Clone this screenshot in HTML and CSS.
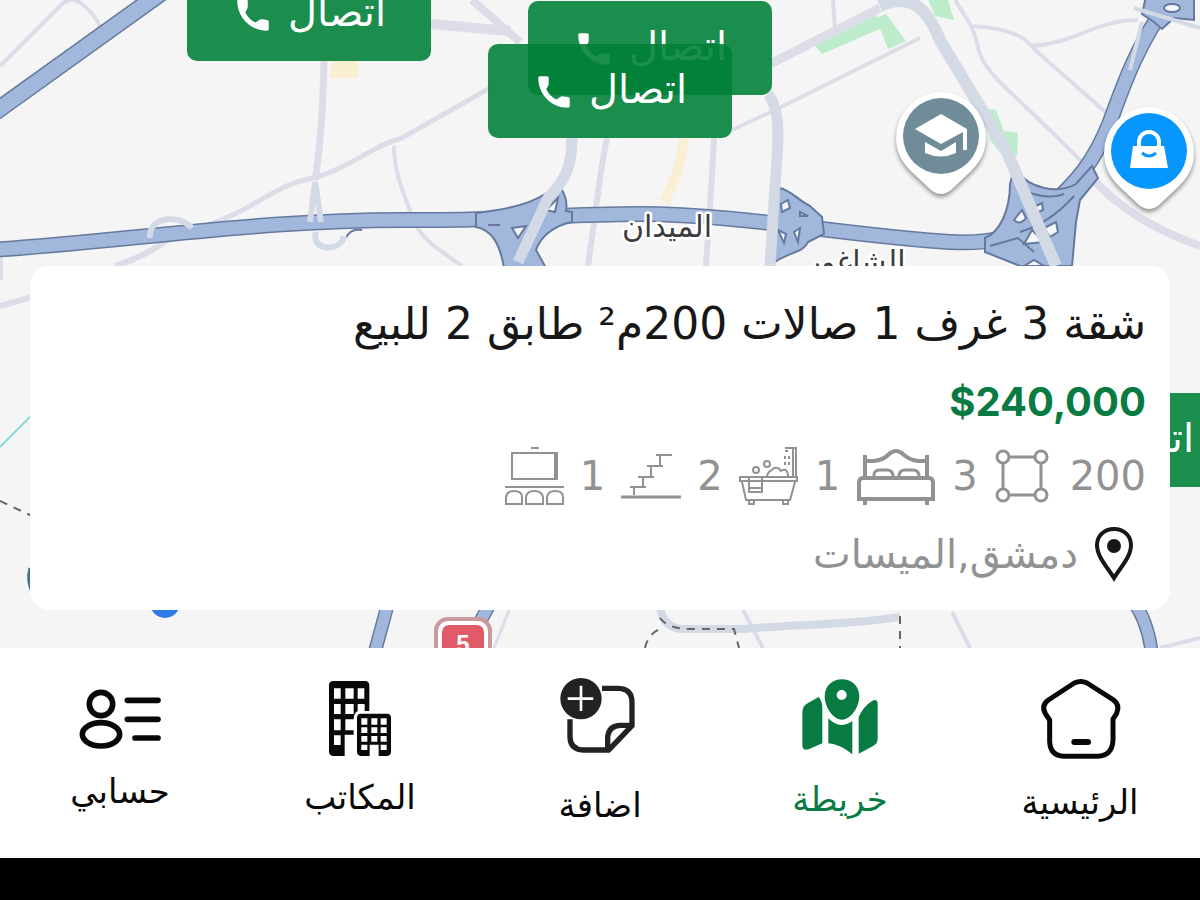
FILE: index.html
```html
<!DOCTYPE html>
<html lang="ar" dir="rtl">
<head>
<meta charset="utf-8">
<meta name="viewport" content="width=device-width, initial-scale=1">
<title>خريطة العقارات</title>
<link rel="stylesheet" href="styles.css">
</head>
<body>
<svg class="defs" aria-hidden="true">
  <symbol id="phone" viewBox="0 0 24 24"><path fill="currentColor" d="M7.6 10.4c1.2 2.6 3.2 4.6 5.8 5.9l2.4-1.6c.5-.3 1-.3 1.5-.2l2.7.4c.6.1 1 .5 1 1.1V20c0 .55-.45 1-1 1-9.39 0-17-7.61-17-17 0-.55.45-1 1-1h4c.6 0 1 .4 1 1v3c0 .5-.1 1-.3 1.400z"/></symbol>
</svg>
<main class="map">
  <svg class="map-canvas" viewBox="0 0 1200 648" preserveAspectRatio="xMidYMid slice" aria-hidden="true">
    <!-- parks and plots -->
    <g fill="#bdeccb">
      <path d="M815 45L876 15L882 28L822 54Z"/><path d="M876 18L886 14L906 41L888 49Z"/><path d="M928 0H948L954 20L935 16Z"/><path d="M984 108L996 110L1004 131L1018 133L1017 155L1006 160L990 140Z"/>
    </g>
    <path fill="#faefd2" d="M332 60H358V78H330Z"/>
    <path fill="none" stroke="#faefd2" stroke-width="10" d="M684 138C682 160 676 180 664 202"/>
    <!-- minor streets -->
    <g fill="none" stroke="#dcdde8" stroke-width="4">
      <path d="M0 66L62 4Q72-4 82 4Q95 14 102 30"/>
      <path d="M324 60C323 110 320 150 315 180" stroke-width="7"/>
      <path d="M205 226C250 212 275 186 305 180C350 170 370 146 402 138L490 88" stroke-width="5"/>
      <path d="M394 146C394 170 402 190 412 216C420 240 440 250 462 266"/>
      <path d="M115 266C145 256 160 246 170 238" stroke-width="6"/>
      <path d="M430 24L510 31" stroke-width="10"/><path d="M472 0L520 42" stroke-width="8"/>
      <path d="M607 138C600 170 596 210 588 266" stroke-width="6"/>
      <path d="M714 138C712 180 709 220 706 266" stroke-width="6"/>
      <path d="M732 130L775 110L920 38"/>
      <path d="M770 64L880 8" stroke-width="9"/>
      <path d="M833 0L835 30"/>
      <path d="M955 0C966 18 975 28 978 48C985 76 1010 88 1085 165"/>
      <path d="M970 26C1015 28 1028 40 1035 50L1110 116"/><path d="M1030 46C1075 44 1095 20 1138 20"/>
      <path d="M0 306L32 297" stroke-width="6"/><path d="M1 256V280"/>
      <path d="M742 608L763 648"/><path d="M952 612L970 648"/><path d="M510 608L494 648" stroke-width="3"/><path d="M1160 648L1200 638"/>
      <path d="M1090 176C1120 210 1160 232 1200 246" stroke-width="8"/>
    </g>
    <!-- highways: dark casing, then blue surface -->
    <g fill="none" stroke="#65799f">
      <path stroke-width="18" d="M-5 112L165-10"/>
      <path stroke-width="16" d="M-10 250C120 242 270 218 420 220C520 220 560 214 640 214C740 214 850 236 950 242C990 244 1010 240 1040 215C1080 180 1095 160 1110 122C1125 80 1140 40 1170 0"/>
      <path stroke-width="14" d="M389 600L374 655M492 600L470 640M1132 600Q1148 620 1152 655"/>
    </g>
    <g fill="none" stroke="#a2b7dc">
      <path stroke-width="15" d="M-5 112L165-10"/>
      <path stroke-width="13" d="M-10 250C120 242 270 218 420 220C520 220 560 214 640 214C740 214 850 236 950 242C990 244 1010 240 1040 215C1080 180 1095 160 1110 122C1125 80 1140 40 1170 0"/>
      <path stroke-width="11" d="M389 600L374 655M492 600L470 640M1132 600Q1148 620 1152 655"/>
    </g>
    <!-- junctions -->
    <g fill="#a2b7dc" stroke="#65799f" stroke-width="2">
      <path d="M476 213C505 210 530 204 545 194L562 190Q568 200 566 211L572 212V222C552 226 540 238 536 250L546 268H504C500 244 492 230 476 227Z"/>
      <path d="M780 188C790 190 798 200 810 206L822 217L824 234L808 242C804 252 790 252 775 262V212Z"/>
      <path d="M1014 168C1030 190 1058 194 1076 184L1092 166L1098 178L1080 200L1076 222L1072 266H1020L985 252L985 238C1000 232 1010 210 1010 184Z"/>
      <path d="M1146-4L1142 14L1154 22L1162 29L1174 18L1194 20V-4Z"/>
    </g>
    <path fill="none" stroke="#65799f" stroke-width="2" d="M488 225H500M1020 232C1040 226 1058 214 1074 196M1028 192Q1048 200 1064 194M990 246L1018 238L1034 252M346 238Q350 228 362 230"/>
    <g fill="#f5f6f8" stroke="#65799f" stroke-width="2">
      <path d="M512 228L526 226L518 238Z"/><path d="M546 210L558 198L555 212Z"/><path d="M781 204L788 200L790 208L782 212Z"/><path d="M800 212L808 216H800Z"/><path d="M794 232L800 228L798 242Z"/><path d="M778 230L786 234L784 243Z"/>
      <path d="M1014 220L1022 210L1026 218Q1020 226 1014 220Z"/><path d="M1036 206L1042 203L1043 210L1036 213Z"/><path d="M1024 244L1032 230L1044 242Z"/><path d="M1044 228L1056 222L1058 232L1050 237Z"/><ellipse cx="1172" cy="8" rx="8" ry="4"/>
      <path d="M1024 266L1034 260L1044 266Z"/>
    </g>
    <g fill="none" stroke="#d3dae6">
      <path stroke-width="11" d="M572 138C572 165 566 180 548 198L518 262"/>
      <path stroke-width="11" d="M768 94C782 110 778 150 775 185L770 266"/>
      <path stroke-width="12" d="M880 6Q905-6 922 10Q932 20 940 40L1006 150L1056 266"/>
      <path stroke-width="6" d="M150 238C148 216 180 214 192 228M316 232C310 252 342 252 344 236"/>
      <path stroke-width="4" d="M1134 8L1200 28M1142 22L1130 70"/>
      <path stroke-width="8" d="M660 606Q662 626 680 629H745C790 624 840 626 900 617"/>
      <path stroke-width="6" d="M315 182L310 222M315 182L321 222"/>
    </g>
    <path fill="none" stroke="#8bd8d8" stroke-width="2" d="M0 447L32 415"/>
    <path fill="none" stroke="#666" stroke-width="2" stroke-dasharray="8 7" d="M0 501L32 516M645 648Q648 634 660 629M660 618Q668 629 690 629H734L739 648M900 616V648"/>
    <path fill="none" stroke="#45708d" stroke-width="3" d="M30 568Q26 582 34 596"/>
    <circle cx="165" cy="603" r="15" fill="#3179e8"/>
    <rect x="436" y="619" width="54" height="44" rx="12" fill="#fff" stroke="#c99a9e" stroke-width="4"/>
    <rect x="442" y="625" width="42" height="34" rx="7" fill="#e05b67"/>
    <text class="shield-text" x="463" y="652">5</text>
    <text class="place-name" x="667" y="237">الميدان</text>
    <text class="place-name" x="856" y="272">الشاغور</text>
    <!-- school pin -->
    <g class="poi"><path fill="#fff" d="M941 92A46 46 0 0 0 896 138C896 154 904 165 914 174L931 190Q941 198 951 190L968 174C978 165 986 154 986 138A46 46 0 0 0 941 92Z"/></g>
    <circle cx="941" cy="136" r="38" fill="#718c99"/>
    <path fill="#fff" d="M915 129L941 114L967 129V150H963V132L941 144ZM925 142L941 151L956 142V153Q941 160 925 153Z"/>
    <!-- shopping pin -->
    <g class="poi"><path fill="#fff" d="M1149 107A46 46 0 0 0 1104 153C1104 169 1112 180 1122 189L1139 205Q1149 213 1159 205L1176 189C1186 180 1194 169 1194 153A46 46 0 0 0 1149 107Z"/></g>
    <circle cx="1149" cy="151" r="38" fill="#0797fc"/>
    <path fill="#fff" d="M1133 146H1164L1168 168H1130Z"/>
    <path fill="none" stroke="#fff" stroke-width="4" d="M1139 148V142A10 10 0 0 1 1159 142V148"/>
    <path fill="none" stroke="#0797fc" stroke-width="3" d="M1142 153Q1149 159 1156 153"/>
  </svg>

  <button class="call call-a" type="button">اتصال<svg class="call-icon" aria-hidden="true"><use href="#phone"/></svg></button>
  <button class="call call-b" type="button">اتصال<svg class="call-icon" aria-hidden="true"><use href="#phone"/></svg></button>
  <button class="call call-c" type="button">اتصال<svg class="call-icon" aria-hidden="true"><use href="#phone"/></svg></button>
  <button class="call call-d" type="button">اتصال<svg class="call-icon" aria-hidden="true"><use href="#phone"/></svg></button>

  <article class="card">
    <h1 class="title">شقة 3 غرف 1 صالات 200م² طابق 2 للبيع</h1>
    <p class="price"><bdi dir="ltr">$240,000</bdi></p>
    <ul class="features">
      <li class="feature">200
        <svg class="feature-icon" viewBox="0 0 60 60" aria-label="المساحة"><g fill="none" stroke="currentColor" stroke-width="3"><path d="M14 11H42M14 49H42M9 17V43M47 17V43"/><circle cx="9" cy="11" r="6"/><circle cx="47" cy="11" r="6"/><circle cx="9" cy="49" r="6"/><circle cx="47" cy="49" r="6"/></g></svg></li>
      <li class="feature">3
        <svg class="feature-icon wide" viewBox="0 0 80 60" aria-label="غرف النوم"><g fill="none" stroke="currentColor" stroke-width="3"><path stroke-width="4" d="M9 32V9M71 32V9M9 15H18Q27 14 32 9Q40 1 48 9Q54 14 62 15H71"/><path d="M18 32V28Q19 24 24 24H31Q36 24 37 29V32M43 32V29Q44 24 49 24H57Q62 24 63 29V32"/><path stroke-width="4" d="M7 32H73Q77 32 77 37V53H3V37Q3 32 7 32ZM9 53V59M71 53V59"/></g></svg></li>
      <li class="feature">1
        <svg class="feature-icon" viewBox="0 0 60 60" aria-label="الحمامات"><g fill="none" stroke="currentColor" stroke-width="2"><path d="M1 31H58V35H1ZM3 36L7 54H51L56 36M10 31H23V46H10ZM10 42H23M10 54V58H15V54M44 54V58H49V54M57 31V2H46M54 31V3M28 31C28 25 33 25 35 22Q40 21 42 25Q49 21 49 31"/><path stroke-dasharray="3 3" d="M46 10V20M50 10V20M46 5H51"/><circle cx="17" cy="24" r="3"/><circle cx="28" cy="18" r="3"/></g></svg></li>
      <li class="feature">2
        <svg class="feature-icon" viewBox="0 0 60 60" aria-label="الطابق"><g fill="none" stroke="currentColor" stroke-width="2"><path d="M9 41H25M17 31H33M26 20H42M35 9H51M13 49V41M22 41V31M30 31V20M39 20V9"/><path stroke-width="3" d="M0 51H60"/></g></svg></li>
      <li class="feature">1
        <svg class="feature-icon" viewBox="0 0 60 60" aria-label="الصالات"><g fill="none" stroke="currentColor" stroke-width="2"><path d="M27 2H35M8 7H53V33H8ZM51 7V33M1 41H60"/><path d="M2 58V51Q3 45 10 45Q18 45 18 51V58ZM22 58V51Q23 45 30 45Q38 45 39 51V58ZM43 58V51Q44 45 51 45Q59 45 59 51V58Z"/></g></svg></li>
    </ul>
    <p class="location"><svg class="location-icon" viewBox="0 0 40 56" aria-hidden="true"><path fill="none" stroke="#171717" stroke-width="4" d="M20 3C10 3 3 10 3 19C3 31 14 42 20 52C26 42 37 31 37 19C37 10 30 3 20 3Z"/><circle cx="20" cy="20" r="7" fill="#171717"/></svg>دمشق,الميسات</p>
  </article>
</main>

<nav class="tabs">
  <a class="tab" href="#home"><svg class="tab-icon home" viewBox="171 39 252 246" aria-hidden="true"><g fill="none" stroke="currentColor" stroke-width="15" stroke-linejoin="round" stroke-linecap="round"><path d="M280 54Q299 45 318 54L396 104Q418 119 407 145L396 162V225Q394 272 350 274H248Q208 272 206 230V165L193 146Q180 121 202 105Z"/><path stroke-width="18" d="M280 231H321"/></g></svg>الرئيسية</a>
  <a class="tab active" href="#map" aria-current="page"><svg class="tab-icon map-tab" viewBox="834 39 252 237" aria-hidden="true"><g fill="currentColor"><path fill-rule="evenodd" d="M966 43C936 43 914 65 914 94C914 123 937 164 966 164C995 164 1018 123 1018 94C1018 65 996 43 966 43ZM965 75A15 15 0 1 1 965 105A15 15 0 1 1 965 75Z"/><path d="M896 96Q907 108 907 130V235L866 253Q847 259 847 240V142Q847 123 864 114Z"/><path d="M925 160Q958 195 997 168V268Q960 238 925 235Z"/><path d="M1016 156Q1030 125 1055 109Q1073 98 1073 119V222Q1073 236 1058 244L1016 266Z"/></g></svg>خريطة</a>
  <a class="tab" href="#add"><svg class="tab-icon add" viewBox="111 39 252 255" aria-hidden="true"><circle cx="180" cy="101" r="62" fill="#222124"/><path fill="none" stroke="#fff" stroke-width="8" d="M180 62V138M140 101H217"/><path fill="none" stroke="#222124" stroke-width="16" d="M243 70H293Q333 72 333 112V182L263 255H187Q147 253 147 215V163M260 258V215Q264 182 298 181H336"/></svg>اضافة</a>
  <a class="tab" href="#offices"><svg class="tab-icon offices" viewBox="834 39 252 231" aria-hidden="true"><path fill="currentColor" fill-rule="evenodd" d="M879 48H976Q987 49 988 60V138H974V117H953V138Q941 145 941 162V209H914V273H879Q868 272 867 261V60Q868 49 879 48ZM882 70V101H902V70ZM916 70V101H941V70ZM953 70V101H973V70ZM882 117V147H902V117ZM916 117V147H941V117ZM882 163V196H902V163ZM916 163V196H941V163ZM882 211V240H902V211Z"/><path fill="currentColor" fill-rule="evenodd" d="M962 146H1042Q1052 147 1053 157V262Q1052 272 1042 273H1016V239H989V273H962Q952 272 951 262V157Q952 147 962 146ZM964 160V179H982V160ZM994 160V179H1012V160ZM1022 160V179H1040V160ZM964 187V204H982V187ZM994 187V204H1012V187ZM1022 187V204H1040V187ZM964 213V230H982V213ZM994 213V230H1012V213ZM1022 213V230H1040V213ZM964 239V255H982V239ZM1022 239V255H1040V239Z"/></svg>المكاتب</a>
  <a class="tab" href="#account"><svg class="tab-icon account" viewBox="114 39 252 213" aria-hidden="true"><g fill="none" stroke="currentColor" stroke-width="17"><circle cx="183" cy="117" r="35"/><ellipse cx="183" cy="208" rx="56" ry="35"/><path stroke-linecap="round" d="M262 106H354M262 163H354M285 219H354"/></g></svg>حسابي</a>
</nav>
<footer class="system-bar"></footer>
</body>
</html>
```

FILE: styles.css
```css
* { box-sizing: border-box; }
body {
  margin: 0;
  min-height: 100vh;
  display: flex;
  flex-direction: column;
  font-family: "DejaVu Sans", sans-serif;
  color: #171717;
  background: #fff;
}
.defs { position: absolute; width: 0; height: 0; }
.map {
  position: relative;
  flex: 1;
  display: flex;
  flex-direction: column;
  justify-content: flex-end;
  padding: 30px 30px 38px;
  overflow: hidden;
  background: #f5f5f5;
}
.map-canvas { position: absolute; inset: 0; width: 100%; height: 100%; }
.poi { filter: drop-shadow(0 3px 2px rgba(0, 0, 0, .4)); }
.place-name {
  font-size: 30px;
  text-anchor: middle;
  fill: #3c3c3c;
  stroke: #fff;
  stroke-width: 5px;
  stroke-linejoin: round;
  paint-order: stroke;
}
.shield-text { font: bold 24px "Liberation Sans", sans-serif; fill: #fff; text-anchor: middle; }

.call {
  position: absolute;
  display: flex;
  align-items: center;
  justify-content: center;
  gap: 14px;
  width: 244px;
  height: 94px;
  padding: 0 0 4px;
  border: 0;
  border-radius: 10px;
  background: rgba(0, 128, 55, .89);
  color: #fff;
  font: 40px "DejaVu Sans", sans-serif;
}
.call-icon { width: 42px; height: 42px; margin-top: 6px; }
.call-a { left: 187px; top: -33px; }
.call-b { left: 528px; top: 1px; }
.call-c { left: 488px; top: 44px; }
.call-d { left: 995px; top: 393px; }

.card {
  position: relative;
  display: flex;
  flex-direction: column;
  padding: 20px 24px 12px;
  border-radius: 20px;
  background: #fff;
}
.title { margin: 0; font-size: 44px; font-weight: 400; line-height: 76px; }
.price {
  margin: 0;
  font-family: Inter, sans-serif;
  font-size: 40px;
  font-weight: 700;
  line-height: 80px;
  color: #087b42;
}
.features {
  display: flex;
  align-items: center;
  gap: 16px;
  height: 68px;
  margin: 0;
  padding: 0;
  list-style: none;
  color: #929292;
  font-size: 40px;
}
.feature { display: flex; align-items: center; gap: 16px; }
.feature-icon { width: 60px; height: 60px; }
.feature-icon.wide { width: 80px; }
.location {
  display: flex;
  align-items: center;
  gap: 16px;
  margin: 0;
  padding: 0 12px;
  height: 88px;
  line-height: 80px;
  font-size: 40px;
  color: #929292;
}
.location-icon { width: 40px; height: 56px; }

.tabs {
  display: grid;
  grid-template-columns: repeat(5, 1fr);
  height: 210px;
  padding-top: 30px;
}
.tab {
  display: flex;
  flex-direction: column;
  align-items: center;
  color: #080808;
  font-size: 34px;
  line-height: 84px;
  text-decoration: none;
}
.tab.active { color: #087b42; }
.tab-icon { width: 84px; overflow: visible; }
.home { height: 82px; }
.map-tab { height: 79px; }
.add { height: 85px; }
.offices { height: 77px; }
.account { height: 71px; }
.system-bar { height: 42px; background: #000; }
```
